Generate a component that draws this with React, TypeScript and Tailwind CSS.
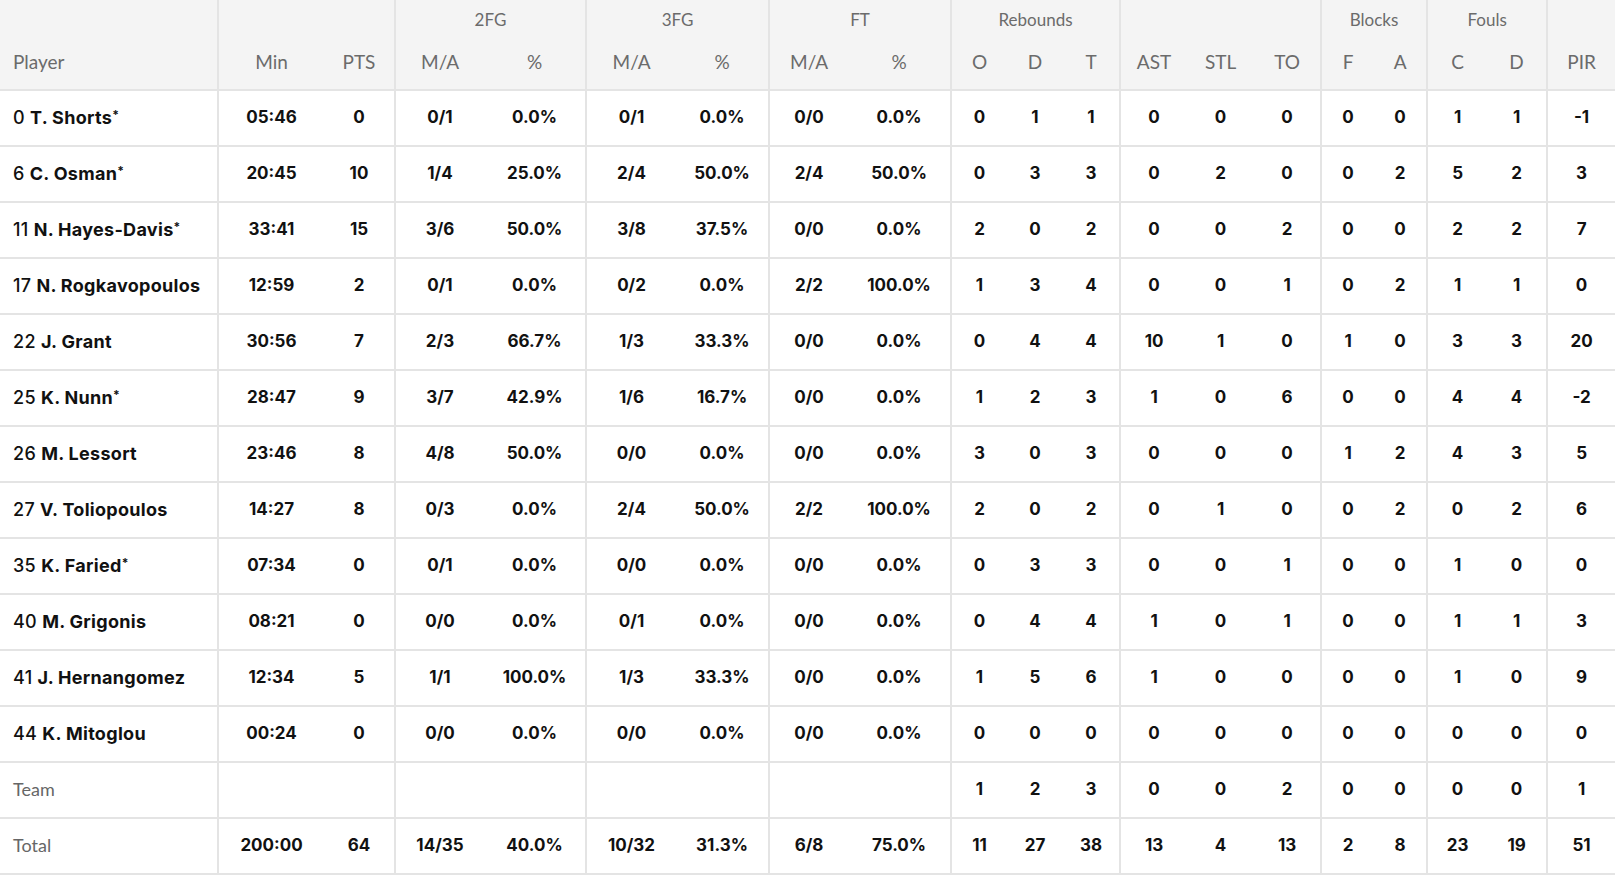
import React from 'react';

type Row = {
  no: string;
  name: string;
  star?: boolean;
  min: string;
  pts: string;
  fg2: string;
  fg2p: string;
  fg3: string;
  fg3p: string;
  ft: string;
  ftp: string;
  o: string;
  d: string;
  t: string;
  ast: string;
  stl: string;
  to: string;
  bf: string;
  ba: string;
  fc: string;
  fd: string;
  pir: string;
};

const r = (
  no: string, name: string, star: boolean, min: string, pts: string,
  fg2: string, fg2p: string, fg3: string, fg3p: string, ft: string, ftp: string,
  o: string, d: string, t: string, ast: string, stl: string, to: string,
  bf: string, ba: string, fc: string, fd: string, pir: string,
): Row => ({ no, name, star, min, pts, fg2, fg2p, fg3, fg3p, ft, ftp, o, d, t, ast, stl, to, bf, ba, fc, fd, pir });

const players: Row[] = [
  r('0', 'T. Shorts', true, '05:46', '0', '0/1', '0.0%', '0/1', '0.0%', '0/0', '0.0%', '0', '1', '1', '0', '0', '0', '0', '0', '1', '1', '-1'),
  r('6', 'C. Osman', true, '20:45', '10', '1/4', '25.0%', '2/4', '50.0%', '2/4', '50.0%', '0', '3', '3', '0', '2', '0', '0', '2', '5', '2', '3'),
  r('11', 'N. Hayes-Davis', true, '33:41', '15', '3/6', '50.0%', '3/8', '37.5%', '0/0', '0.0%', '2', '0', '2', '0', '0', '2', '0', '0', '2', '2', '7'),
  r('17', 'N. Rogkavopoulos', false, '12:59', '2', '0/1', '0.0%', '0/2', '0.0%', '2/2', '100.0%', '1', '3', '4', '0', '0', '1', '0', '2', '1', '1', '0'),
  r('22', 'J. Grant', false, '30:56', '7', '2/3', '66.7%', '1/3', '33.3%', '0/0', '0.0%', '0', '4', '4', '10', '1', '0', '1', '0', '3', '3', '20'),
  r('25', 'K. Nunn', true, '28:47', '9', '3/7', '42.9%', '1/6', '16.7%', '0/0', '0.0%', '1', '2', '3', '1', '0', '6', '0', '0', '4', '4', '-2'),
  r('26', 'M. Lessort', false, '23:46', '8', '4/8', '50.0%', '0/0', '0.0%', '0/0', '0.0%', '3', '0', '3', '0', '0', '0', '1', '2', '4', '3', '5'),
  r('27', 'V. Toliopoulos', false, '14:27', '8', '0/3', '0.0%', '2/4', '50.0%', '2/2', '100.0%', '2', '0', '2', '0', '1', '0', '0', '2', '0', '2', '6'),
  r('35', 'K. Faried', true, '07:34', '0', '0/1', '0.0%', '0/0', '0.0%', '0/0', '0.0%', '0', '3', '3', '0', '0', '1', '0', '0', '1', '0', '0'),
  r('40', 'M. Grigonis', false, '08:21', '0', '0/0', '0.0%', '0/1', '0.0%', '0/0', '0.0%', '0', '4', '4', '1', '0', '1', '0', '0', '1', '1', '3'),
  r('41', 'J. Hernangomez', false, '12:34', '5', '1/1', '100.0%', '1/3', '33.3%', '0/0', '0.0%', '1', '5', '6', '1', '0', '0', '0', '0', '1', '0', '9'),
  r('44', 'K. Mitoglou', false, '00:24', '0', '0/0', '0.0%', '0/0', '0.0%', '0/0', '0.0%', '0', '0', '0', '0', '0', '0', '0', '0', '0', '0', '0'),
];

const team = r('', 'Team', false, '', '', '', '', '', '', '', '', '1', '2', '3', '0', '0', '2', '0', '0', '0', '0', '1');
const total = r('', 'Total', false, '200:00', '64', '14/35', '40.0%', '10/32', '31.3%', '6/8', '75.0%', '11', '27', '38', '13', '4', '13', '2', '8', '23', '19', '51');

const widths = ['w-[218px]', 'w-[106px]', 'w-[71px]', 'w-[89px]', 'w-[102px]', 'w-[90px]', 'w-[93px]', 'w-[79px]', 'w-[103px]', 'w-[56px]', 'w-[56px]', 'w-[57px]', 'w-[67px]', 'w-[67px]', 'w-[67px]', 'w-[53px]', 'w-[53px]', 'w-[60px]', 'w-[60px]', 'w-[68px]'];

const keys: (keyof Row)[] = ['min', 'pts', 'fg2', 'fg2p', 'fg3', 'fg3p', 'ft', 'ftp', 'o', 'd', 't', 'ast', 'stl', 'to', 'bf', 'ba', 'fc', 'fd', 'pir'];
// columns that close a group get the vertical rule
const groupEnd = new Set(['pts', 'fg2p', 'fg3p', 'ftp', 't', 'to', 'ba', 'fd']);

const subHeads = ['Min', 'PTS', 'M/A', '%', 'M/A', '%', 'M/A', '%', 'O', 'D', 'T', 'AST', 'STL', 'TO', 'F', 'A', 'C', 'D', 'PIR'];

const groups: { label: string; span: number }[] = [
  { label: '', span: 2 },
  { label: '2FG', span: 2 },
  { label: '3FG', span: 2 },
  { label: 'FT', span: 2 },
  { label: 'Rebounds', span: 3 },
  { label: '', span: 3 },
  { label: 'Blocks', span: 2 },
  { label: 'Fouls', span: 2 },
  { label: '', span: 1 },
];

function BodyRow({ row, muted }: { row: Row; muted?: boolean }) {
  return (
    <tr className="h-[56px] border-b-2 border-[#e4e4e4]">
      <td className="border-r-2 border-[#e4e4e4] pl-[13px] text-left whitespace-nowrap">
        {muted ? (
          <span className="font-normal text-[18px] text-[#666]" style={{ fontFamily: 'Lato, sans-serif' }}>{row.name}</span>
        ) : (
          <span className="text-[18px] tracking-[0.3px]">
            <span className="font-medium">{row.no} </span>
            <span className="font-bold">{row.name}</span>
            {row.star && <span className="font-bold text-[12px] align-[5px]">*</span>}
          </span>
        )}
      </td>
      {keys.map(k => (
        <td key={k} className={`text-center font-bold ${groupEnd.has(k) ? 'border-r-2 border-[#e4e4e4]' : ''}`}>
          {row[k] as string}
        </td>
      ))}
    </tr>
  );
}

export default function App() {
  return (
    <div className="bg-white w-[1615px] overflow-hidden" style={{ fontFamily: 'Inter, "Open Sans", sans-serif' }}>
      <table className="table-fixed border-collapse w-[1615px] text-[17px] text-[#111]">
        <colgroup>
          {widths.map((w, i) => <col key={i} className={w} />)}
        </colgroup>
        <thead className="bg-[#f4f4f4] text-[#6b6b6b]" style={{ fontFamily: 'Lato, "Open Sans", sans-serif' }}>
          <tr className="h-[40px]">
            <th className="border-r-2 border-[#e4e4e4]" />
            {groups.map((g, i) => (
              <th key={i} colSpan={g.span} className={`text-[17px] font-normal text-center ${i < groups.length - 1 ? 'border-r-2 border-[#e4e4e4]' : ''}`}>
                {g.label}
              </th>
            ))}
          </tr>
          <tr className="h-[50px] border-b-2 border-[#e4e4e4]">
            <th className="border-r-2 border-[#e4e4e4] pl-[13px] text-left font-normal text-[19px] pb-[4px]">Player</th>
            {subHeads.map((h, i) => (
              <th key={i} className={`text-center font-normal text-[19px] pb-[4px] ${groupEnd.has(keys[i]) ? 'border-r-2 border-[#e4e4e4]' : ''}`}>
                {h}
              </th>
            ))}
          </tr>
        </thead>
        <tbody>
          {players.map(p => <BodyRow key={p.no} row={p} />)}
          <BodyRow row={team} muted />
          <BodyRow row={total} muted />
        </tbody>
      </table>
    </div>
  );
}
